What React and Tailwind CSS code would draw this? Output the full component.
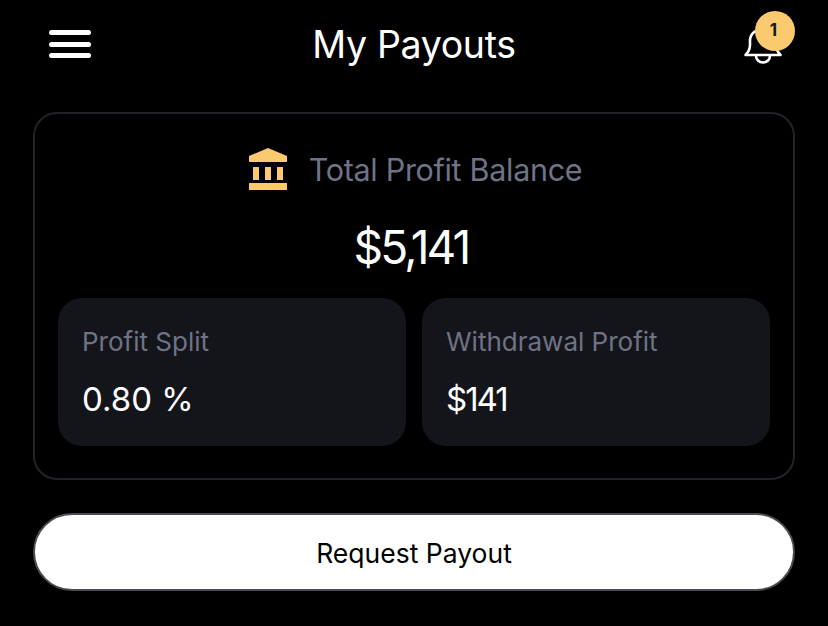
export default function App() {
  return (
    <div className="min-h-[626px] w-[828px] overflow-hidden bg-black font-['Inter',sans-serif] text-white">
      {/* Header */}
      <header className="grid h-[112px] grid-cols-[1fr_auto_1fr] items-start pl-[49px] pr-[33px]">
        <div className="mt-[30px] flex w-[42px] flex-col gap-[6.5px]">
          <span className="h-[5px] rounded-full bg-white" />
          <span className="h-[5px] rounded-full bg-white" />
          <span className="h-[5px] rounded-full bg-white" />
        </div>
        <h1 className="mt-[21px] pr-[16px] text-[37.5px] leading-[48px] font-normal tracking-[-0.35px]">
          My Payouts
        </h1>
        <div className="relative mt-[11px] ml-auto h-[56px] w-[50px]">
          <svg
            className="absolute top-[16px] left-[-2px]"
            width="40"
            height="40"
            viewBox="0 0 40 40"
            fill="none"
            stroke="white"
            strokeWidth="2.6"
            strokeLinecap="round"
            strokeLinejoin="round"
          >
            <path d="M2.500 28c3-3 4.500-5 4.500-10v-4.500C7 7 13 2 20 2s13 5 13 11.500V18c0 5 1.500 7 4.500 10z" />
            <path d="M13 28.500c0 4 3 7 7 7s7-3 7-7" />
          </svg>
          <span className="absolute top-0 right-0 flex h-[40px] w-[40px] items-center justify-center rounded-full bg-[#fbc96e] pr-[3px] text-[17px] font-bold text-[#14151a]">
            1
          </span>
        </div>
      </header>

      <main className="px-[33px]">
        {/* Balance card */}
        <section className="flex h-[368px] flex-col rounded-[24px] border-2 border-[#22232a] px-[23px]">
          <div className="mt-[34px] flex items-center justify-center gap-[22px] pl-[3px]">
            <svg width="38" height="42" viewBox="0 0 38 42" fill="#fbc96e">
              <path d="M19 0 38 8v6H0V8z" />
              <path d="M4 19h6v13H4zM16 19h6v13h-6zM28 19h6v13h-6z" />
              <path d="M0 35h38v7H0z" />
            </svg>
            <span className="relative top-[1px] text-[30.5px] leading-[40px] tracking-[-0.3px] text-[#6f7385]">
              Total Profit Balance
            </span>
          </div>
          <p className="mt-[29px] pr-[6px] text-center text-[46px] leading-[56px] font-normal tracking-[-2.8px]">
            $5,141
          </p>
          <div className="mt-[23px] grid grid-cols-2 gap-[16px]">
            <div className="h-[148px] rounded-[24px] bg-[#14151a] px-[24px] pt-[26px]">
              <p className="text-[26px] leading-[36px] text-[#6f7385]">Profit Split</p>
              <p className="mt-[17px] text-[33px] leading-[44px]">0.80 %</p>
            </div>
            <div className="h-[148px] rounded-[24px] bg-[#14151a] px-[24px] pt-[26px]">
              <p className="text-[26px] leading-[36px] text-[#6f7385]">Withdrawal Profit</p>
              <p className="mt-[17px] text-[33px] leading-[44px] tracking-[-2px]">$141</p>
            </div>
          </div>
        </section>

        {/* Action */}
        <button className="mt-[33px] h-[78px] w-full rounded-full border-2 border-[#4b4c52] bg-white pt-[3px] text-[26.5px] font-normal text-black">
          Request Payout
        </button>
      </main>
    </div>
  );
}
